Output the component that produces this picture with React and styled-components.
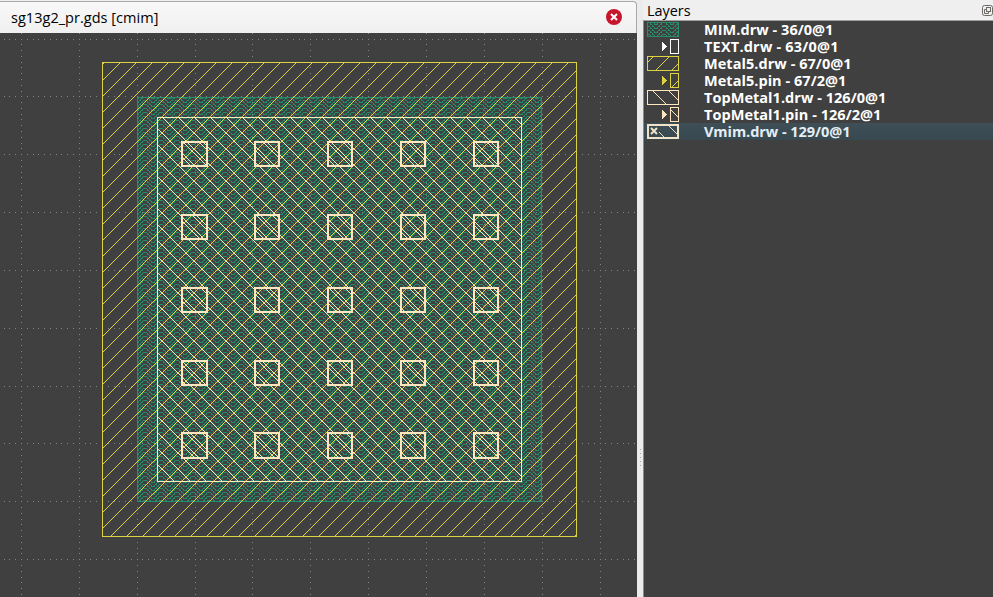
import React from "react";
import styled, { createGlobalStyle } from "styled-components";

const Global = createGlobalStyle`
  * { box-sizing: border-box; }
  html, body { margin: 0; background: #efefef; overflow: hidden; }
  body { font-family: "Open Sans", "Noto Sans", sans-serif; }
`;

const Window = styled.div`
  display: grid;
  grid-template-columns: 637px 6px 350px;
  width: 993px;
  height: 597px;
  background: #efefef;
`;
const ViewPane = styled.section`
  display: flex;
  flex-direction: column;
  min-width: 0;
`;
const TabBar = styled.header`
  display: flex;
  align-items: center;
  justify-content: space-between;
  height: 32px;
  margin-top: 1px;
  padding: 0 14px 1px 11px;
  border-top: 1px solid #a9aaa8;
  border-right: 1px solid #a9aaa8;
  border-top-right-radius: 4px;
  background: linear-gradient(#f8f8f8, #f0f0f0);
`;
const TabTitle = styled.span`
  padding-top: 2px;
  font-size: 14.5px;
  line-height: 20px;
  letter-spacing: 0.03px;
  color: #000;
  white-space: pre;
`;
const CloseButton = styled.button`
  display: flex;
  width: 16px;
  height: 16px;
  padding: 0;
  border: 0;
  background: none;
`;
const Canvas = styled.svg`
  display: block;
  width: 637px;
  height: 564px;
  background: #404040;
`;
const Splitter = styled.div`
  display: flex;
  flex-direction: column;
  align-items: center;
  justify-content: flex-start;
  gap: 3px;
  padding-top: 449px;
  background: #ebebeb;
`;
const Grip = styled.i`
  width: 1px;
  height: 1px;
  background: #a8a8a8;
`;
const LayerPane = styled.aside`
  display: flex;
  flex-direction: column;
`;
const LayerHeader = styled.header`
  display: flex;
  align-items: center;
  justify-content: space-between;
  height: 20px;
  padding: 2px 0 0 4px;
  font-size: 14.4px;
  line-height: 18px;
  color: #000;
`;
const LayerTitle = styled.span`
  white-space: pre;
`;
const LayerList = styled.div`
  flex: 1;
  border-top: 1px solid #a0a0a0;
  border-left: 1px solid #8a8a8a;
  background: #404040;
`;
const LayerRow = styled.div`
  display: flex;
  align-items: center;
  height: 17px;
  padding-left: 3px;
  background: ${(p) => (p.$selected ? "linear-gradient(#3e4f58, #384850)" : "transparent")};
`;
const Swatch = styled.svg`
  display: block;
  flex: none;
  width: 32px;
  height: 16px;
  margin-right: 25px;
`;
const LayerName = styled.span`
  font-size: 14.5px;
  font-weight: 700;
  line-height: 17px;
  letter-spacing: ${(p) => p.$track}px;
  color: ${(p) => (p.$selected ? "#e4eef4" : "#ffffff")};
  white-space: pre;
`;

const YELLOW = "#ddd23f";
const CREAM = "#ffe6bf";
const GREEN = "#268c6b";

const pixels = (test, w, h) => {
  let d = "";
  for (let y = 0; y < h; y++)
    for (let x = 0; x < w; x++) if (test(x, y)) d += `M${x} ${y}h1v1h-1z`;
  return d;
};
const RISING = (k) => pixels((x, y) => (x + y - k + 64) % 16 === 0, 16, 16);
const FALLING = (k) => pixels((x, y) => (x - y - k + 64) % 16 === 0, 16, 16);

// Stepped zigzag, one peak per 16 columns, repeated every 4 rows
const LEVELS = [0, 0, 0, 2, 2, 4, 4, 6, 6, 6, 6, 4, 4, 2, 2, 0];
const CHEVRON_PATH = pixels((x, y) => {
  const level = LEVELS[x];
  const top = Math.min(LEVELS[(x + 15) % 16], LEVELS[(x + 1) % 16], level);
  const first = top < level ? level - 1 : level;
  for (let row = first; row <= level; row++) if ((y - row + 64) % 4 === 0) return true;
  return false;
}, 16, 8);

function Fill({ id, d, color, h = 16, x = 0, y = 0 }) {
  return (
    <pattern id={id} x={x} y={y} width="16" height={h} patternUnits="userSpaceOnUse">
      <path d={d} fill={color} />
    </pattern>
  );
}

const Outline = ({ x, y, w, h, color, fill, t = 1 }) => (
  <rect x={x + t / 2} y={y + t / 2} width={w - t} height={h - t} fill={fill} stroke={color} strokeWidth={t} />
);

const STEP = 57.857;
const gridDots = () => {
  let d = "";
  for (let i = -1; i < 12; i++)
    for (let s = 0; s < 10; s++) {
      for (let j = -1; j < 11; j++) {
        const f = s / 10;
        d += `M${Math.round(21 + (i + f) * STEP)} ${Math.round(38.5 + j * STEP)}h1v1h-1z`;
        d += `M${Math.round(21 + i * STEP)} ${Math.round(38.5 + (j + f) * STEP)}h1v1h-1z`;
      }
    }
  return d;
};
const GRID = gridDots();
const COLS = [[181, 27], [254, 26], [327, 26], [400, 26], [473, 26]];
const ROWS = [[141, 26], [214, 26], [287, 26], [360, 26], [432, 27]];

function LayoutCanvas() {
  return (
    <Canvas viewBox="0 33 637 564" shapeRendering="crispEdges">
      <defs>
        <Fill id="metal5" d={RISING(6)} color={YELLOW} />
        <Fill id="topmetal" d={FALLING(13)} color={CREAM} />
        <Fill id="vmim" d={FALLING(9)} color={CREAM} />
        <Fill id="mim" d={CHEVRON_PATH} color={GREEN} h={8} />
      </defs>
      <path d={GRID} fill="#858585" />
      <Outline x={137} y={97} w={405} h={405} color={GREEN} fill="url(#mim)" />
      <Outline x={102} y={62} w={475} h={475} color={YELLOW} fill="url(#metal5)" />
      <Outline x={157} y={117} w={365} h={365} color={CREAM} fill="url(#topmetal)" />
      {ROWS.map(([y, h]) =>
        COLS.map(([x, w]) => (
          <Outline key={`${x}-${y}`} x={x} y={y} w={w} h={h} t={2} color={CREAM} fill="url(#vmim)" />
        ))
      )}
    </Canvas>
  );
}

const LAYERS = [
  { name: "MIM.drw - 36/0@1", kind: "mim", color: GREEN, track: 0.04 },
  { name: "TEXT.drw - 63/0@1", kind: "pin", color: "#ffffff", track: 0.2 },
  { name: "Metal5.drw - 67/0@1", kind: "box", color: YELLOW, lines: "M9 14L22 1M25 14L31 8M1 6L6 1", track: 0.05 },
  { name: "Metal5.pin - 67/2@1", kind: "pin", color: YELLOW, lines: "M25 14L31 8", track: 0.04 },
  { name: "TopMetal1.drw - 126/0@1", kind: "box", color: CREAM, lines: "M6 1L19 14M22 1L31 10", track: 0.04 },
  { name: "TopMetal1.pin - 126/2@1", kind: "pin", color: CREAM, lines: "M24 3L31 10", track: 0.04 },
  { name: "Vmim.drw - 129/0@1", kind: "marked", color: "#efe2c6", lines: "M12 8L17 13M22 2L30 10", selected: true, track: -0.05 },
];

function LayerSwatch({ kind, color, lines }) {
  return (
    <Swatch viewBox="0 0 32 16" shapeRendering="crispEdges">
      {kind === "mim" && (
        <>
          <defs><Fill id="mimSwatch" d={CHEVRON_PATH} color={GREEN} h={8} /></defs>
          <Outline x={0} y={0} w={32} h={15} color={color} fill="url(#mimSwatch)" />
        </>
      )}
      {(kind === "box" || kind === "marked") && (
        <Outline x={0} y={0} w={32} h={15} t={kind === "marked" ? 2 : 1} color={color} fill="none" />
      )}
      {kind === "pin" && (
        <>
          <Outline x={23} y={0} w={9} h={15} color={color} fill="none" />
          <path d="M15 3h1v1h1v1h1v1h1v1h1v1h-1v1h-1v1h-1v1h-1v1h-1z" fill={color} />
        </>
      )}
      {lines && <path d={lines} stroke={color} fill="none" />}
      {kind === "marked" && (
        <path d="M4 4l6 6M10 4l-6 6" stroke={color} strokeWidth="2" shapeRendering="auto" />
      )}
    </Swatch>
  );
}

export default function App() {
  return (
    <>
      <Global />
      <Window>
        <ViewPane>
          <TabBar>
            <TabTitle>sg13g2_pr.gds [cmim]</TabTitle>
            <CloseButton aria-label="Close">
              <svg width="16" height="16" viewBox="0 0 16 16">
                <circle cx="8" cy="8" r="8" fill="#c7162b" />
                <path d="M5 5l6 6M11 5l-6 6" stroke="#fff" strokeWidth="2" />
              </svg>
            </CloseButton>
          </TabBar>
          <LayoutCanvas />
        </ViewPane>
        <Splitter>
          {[0, 1, 2, 3, 4].map((n) => <Grip key={n} />)}
        </Splitter>
        <LayerPane>
          <LayerHeader>
            <LayerTitle>Layers</LayerTitle>
            <svg width="11" height="12" viewBox="0 0 11 12" fill="none" stroke="#6d6a66">
              <rect x="0.5" y="0.5" width="10" height="10" rx="2" />
              <rect x="4.5" y="2.5" width="4" height="4" />
              <path d="M4 4.5H2.5v4h4V7" />
            </svg>
          </LayerHeader>
          <LayerList>
            {LAYERS.map((l) => (
              <LayerRow key={l.name} $selected={l.selected}>
                <LayerSwatch {...l} />
                <LayerName $selected={l.selected} $track={l.track}>{l.name}</LayerName>
              </LayerRow>
            ))}
          </LayerList>
        </LayerPane>
      </Window>
    </>
  );
}
